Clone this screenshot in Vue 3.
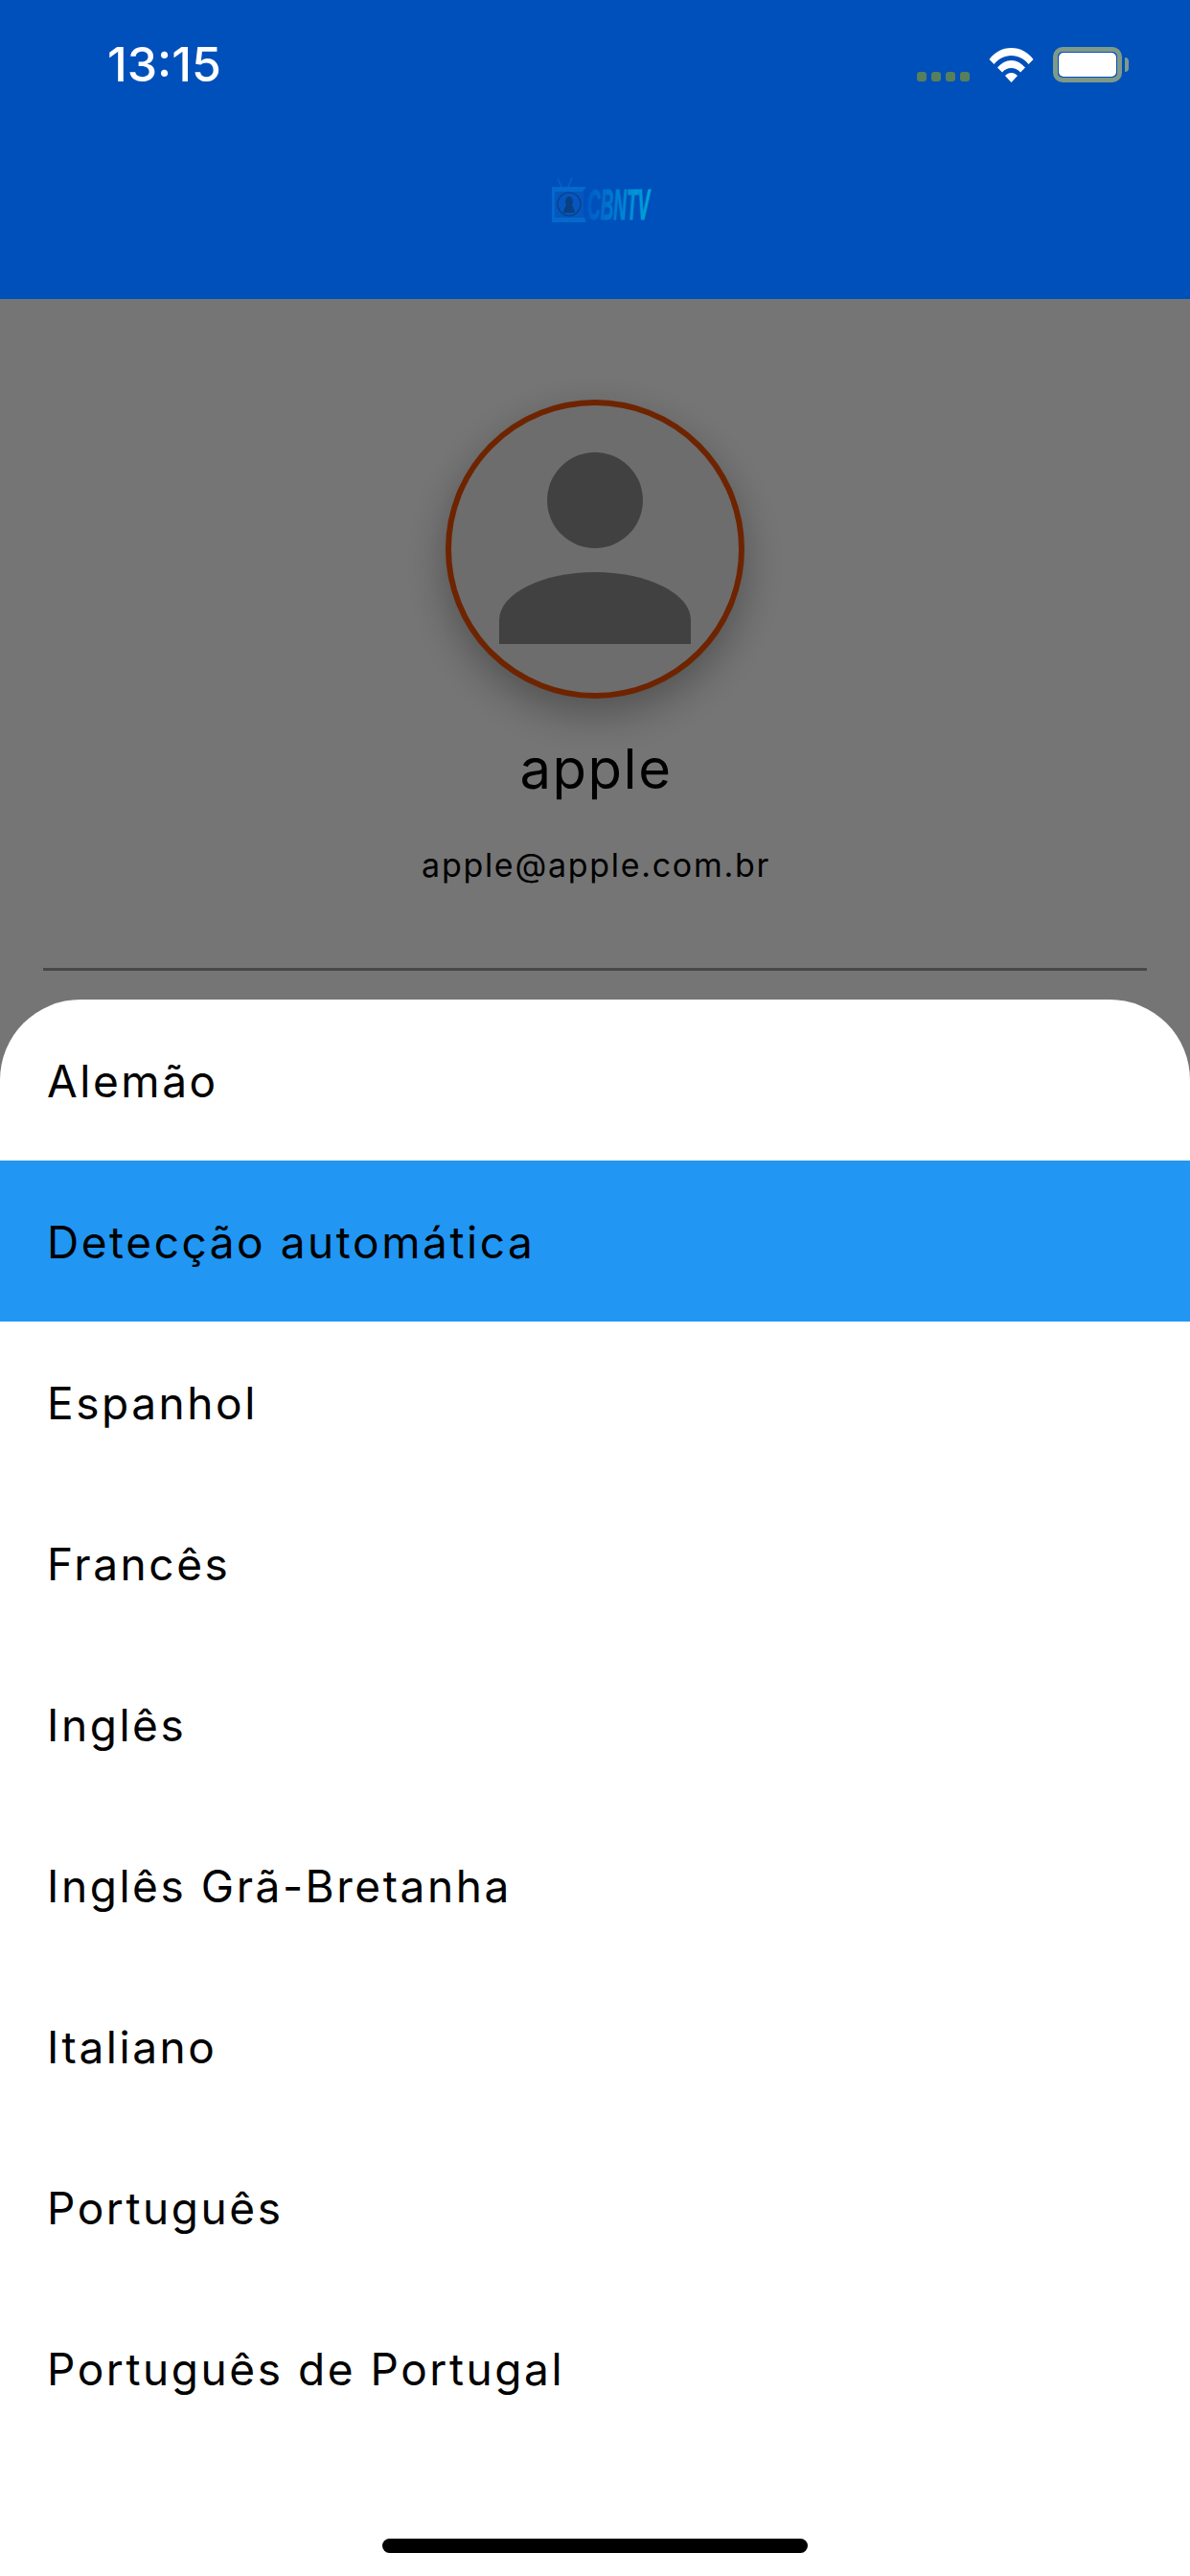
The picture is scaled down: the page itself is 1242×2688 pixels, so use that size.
<template>
  <div class="page">
    <header class="appbar">
      <div class="statusbar">
        <span class="time">13:15</span>
        <div class="status-icons">
          <div class="signal">
            <i v-for="n in 4" :key="n"></i>
          </div>
          <svg class="wifi" width="47" height="36" viewBox="0 0 47 36">
            <path d="M0.5 12C6 4.5 14 0 23.5 0S41 4.5 46.5 12L41.5 17C37 11.5 31 8 23.5 8S10 11.5 5.5 17Z" fill="#fff" />
            <path d="M9 20.5C13 16 18 13 23.5 13S34 16 38 20.5L33 25.5C30.5 22.5 27.5 21 23.5 21S16.5 22.5 14 25.5Z" fill="#fff" />
            <path d="M17 29C19 27 21 26 23.5 26S28 27 30 29L23.5 36Z" fill="#fff" />
          </svg>
          <div class="battery">
            <div class="battery-fill"></div>
            <div class="battery-cap"></div>
          </div>
        </div>
      </div>
      <div class="toolbar">
        <svg class="logo" width="110" height="60" viewBox="0 0 110 60">
          <defs>
            <linearGradient id="logoText" gradientUnits="userSpaceOnUse" x1="0" x2="72" y1="0" y2="0">
              <stop offset="0" stop-color="#005cc6" />
              <stop offset="1" stop-color="#00a4da" />
            </linearGradient>
          </defs>
          <path d="M10 10L6 1M17 10L21 0" stroke="#0a68cc" stroke-width="1" />
          <path d="M0 10H36L32 15H4V42H34L36 47H0Z" fill="#0468cc" />
          <rect x="3" y="15" width="30" height="27" fill="#0556be" />
          <circle cx="18" cy="28" r="12" fill="none" stroke="#0a3f80" stroke-width="1.2" />
          <path d="M12 37C13 32 14 31 15 29C13 25 15 20 18 20S23 25 21 29C22 31 23 32 24 37Z" fill="#0a3f80" />
          <text class="logo-text" transform="translate(37 44) scale(0.9 2.14)" fill="url(#logoText)" stroke="url(#logoText)" stroke-width="0.4">CBNTV</text>
        </svg>
      </div>
    </header>

    <main class="content">
      <div class="profile">
        <div class="avatar">
          <div class="head"></div>
          <div class="shoulders"></div>
        </div>
        <div class="name">apple</div>
        <div class="email">apple@apple.com.br</div>
      </div>
      <hr class="divider" />

      <div class="scrim">
        <div class="sheet">
          <div
            v-for="lang in languages"
            :key="lang"
            class="row"
            :class="{ selected: lang === selected }"
          >
            {{ lang }}
          </div>
          <div class="home-bar"></div>
        </div>
      </div>
    </main>
  </div>
</template>

<script setup>
const selected = 'Detecção automática'

const languages = [
  'Alemão',
  'Detecção automática',
  'Espanhol',
  'Francês',
  'Inglês',
  'Inglês Grã-Bretanha',
  'Italiano',
  'Português',
  'Português de Portugal',
]
</script>

<style>
html,
body {
  margin: 0;
  background: #fff;
}
</style>

<style scoped>
.page {
  width: 1242px;
  height: 2688px;
  display: flex;
  flex-direction: column;
  overflow: hidden;
  font-family: Inter, "Liberation Sans", sans-serif;
  color: #000;
}
.appbar {
  height: 312px;
  background: #0050bb;
  flex-shrink: 0;
}
.statusbar {
  height: 134px;
  display: flex;
  justify-content: space-between;
  align-items: flex-start;
  padding: 49px 71px 0 112px;
  box-sizing: border-box;
}
.time {
  color: #fff;
  font-size: 50px;
  font-weight: 500;
  line-height: 37px;
}
.status-icons {
  display: flex;
  align-items: flex-end;
}
.signal {
  display: flex;
  gap: 5px;
  margin: 0 20px 1px 0;
}
.signal i {
  width: 10px;
  height: 10px;
  border-radius: 3px;
  background: #587f5c;
}
.wifi {
  display: block;
  margin-right: 20px;
}
.battery {
  position: relative;
  width: 72px;
  height: 37px;
  box-sizing: border-box;
  border: 5px solid #7f9a88;
  border-radius: 10px;
  padding: 1px;
}
.battery-fill {
  height: 25px;
  background: #fff;
  border-radius: 5px;
}
.battery-cap {
  position: absolute;
  left: 70px;
  top: 6px;
  width: 4px;
  height: 15px;
  background: #7f9a88;
  border-radius: 0 4px 4px 0;
}
.toolbar {
  display: flex;
  justify-content: center;
}
.logo {
  display: block;
  margin: 51px 0 0 20px;
}
.logo-text {
  font-family: "Liberation Sans", sans-serif;
  font-size: 21px;
  font-weight: 700;
  font-style: italic;
}
.content {
  position: relative;
  flex: 1;
  background: #fff;
  padding-top: 105px;
}
.profile {
  display: flex;
  flex-direction: column;
  align-items: center;
}
.avatar {
  width: 312px;
  height: 312px;
  box-sizing: border-box;
  border: 6px solid #ef5000;
  border-radius: 50%;
  background: #eee;
  box-shadow: 0 16px 44px rgba(0, 0, 0, 0.3);
  display: flex;
  flex-direction: column;
  align-items: center;
  padding-top: 49px;
}
.head {
  width: 100px;
  height: 100px;
  border-radius: 50%;
  background: #8f8f8f;
}
.shoulders {
  width: 200px;
  height: 75px;
  margin-top: 25px;
  background: #8f8f8f;
  border-radius: 100px 100px 0 0 / 50px 50px 0 0;
}
.name {
  margin-top: 39px;
  padding-left: 2px;
  font-size: 58px;
  line-height: 68px;
  letter-spacing: 1.5px;
}
.email {
  margin-top: 46px;
  padding-left: 2px;
  font-size: 34px;
  line-height: 42px;
  letter-spacing: 1.7px;
}
.divider {
  margin: 0 45px;
  margin-top: 86px;
  border: none;
  height: 3px;
  background: #9c9c9c;
}
.scrim {
  position: absolute;
  inset: 0;
  background: rgba(0, 0, 0, 0.54);
  display: flex;
  flex-direction: column;
  justify-content: flex-end;
}
.sheet {
  position: relative;
  height: 1645px;
  box-sizing: border-box;
  background: #fff;
  border-radius: 84px 84px 0 0;
}
.row {
  height: 168px;
  display: flex;
  align-items: center;
  padding: 2px 0 0 49px;
  box-sizing: border-box;
  font-size: 46px;
  letter-spacing: 2.55px;
}
.row.selected {
  background: #2196f3;
}
.home-bar {
  position: absolute;
  left: 399px;
  bottom: 24px;
  width: 444px;
  height: 15px;
  border-radius: 8px;
  background: #000;
}
</style>
